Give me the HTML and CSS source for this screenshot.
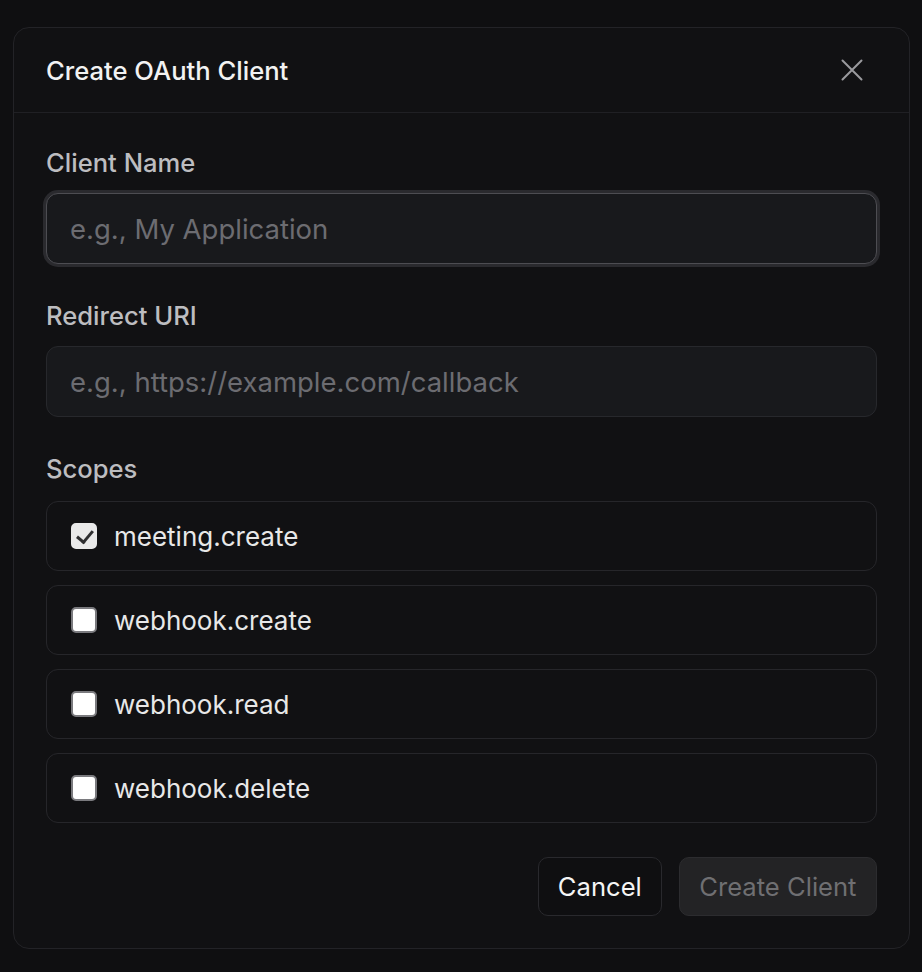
FILE: index.html
```html
<!DOCTYPE html>
<html lang="en">
<head>
    <meta charset="UTF-8">
    <meta name="viewport" content="width=device-width, initial-scale=1.0">
    <title>Create OAuth Client</title>
    <link rel="stylesheet" href="styles.css">
</head>
<body>
    <div class="dialog">
        <div class="dialog-header">
            <h1>Create OAuth Client</h1>
            <button class="close-btn" aria-label="Close">
                <svg width="22" height="22" viewBox="0 0 22 22" fill="none" stroke="currentColor" stroke-width="2" stroke-linecap="round">
                    <path d="M1.5 1.5L20.5 20.5M20.5 1.5L1.5 20.5"/>
                </svg>
            </button>
        </div>

        <form class="dialog-body">
            <div class="field">
                <label for="client-name">Client Name</label>
                <input id="client-name" class="text-input focused" type="text" placeholder="e.g., My Application" autofocus>
            </div>

            <div class="field">
                <label for="redirect-uri">Redirect URI</label>
                <input id="redirect-uri" class="text-input" type="text" placeholder="e.g., https://example.com/callback">
            </div>

            <div class="field scopes">
                <label>Scopes</label>
                <div class="scope-list">
                    <label class="scope-item"><input type="checkbox" checked> meeting.create</label>
                    <label class="scope-item"><input type="checkbox"> webhook.create</label>
                    <label class="scope-item"><input type="checkbox"> webhook.read</label>
                    <label class="scope-item"><input type="checkbox"> webhook.delete</label>
                </div>
            </div>

            <div class="actions">
                <button type="button" class="btn btn-outline">Cancel</button>
                <button type="submit" class="btn btn-primary" disabled>Create Client</button>
            </div>
        </form>
    </div>
</body>
</html>
```

FILE: styles.css
```css
* {
    margin: 0;
    padding: 0;
    box-sizing: border-box;
}

body {
    font-family: Inter, 'Noto Sans', sans-serif;
    background: #0f0f11;
    color: #ededed;
    padding: 27px 12px 24px 13px;
}

.dialog {
    background: #111113;
    border: 1px solid #232327;
    border-radius: 16px;
    width: 897px;
}

.dialog-header {
    display: flex;
    justify-content: space-between;
    align-items: center;
    height: 85px;
    padding: 0 46px 0 32px;
    border-bottom: 1px solid #202024;
}

.dialog-header h1 {
    font-size: 25.6px;
    font-weight: 500;
    color: #f2f2f2;
}

.close-btn {
    background: none;
    border: none;
    color: #9a9a9e;
    display: flex;
    cursor: pointer;
}

.dialog-body {
    display: flex;
    flex-direction: column;
    padding: 35px 32px 32px 32px;
}

.field {
    display: flex;
    flex-direction: column;
    margin-bottom: 37px;
}

.field.scopes {
    margin-bottom: 34px;
}

.field > label {
    font-size: 25.6px;
    font-weight: 500;
    line-height: 30px;
    color: #bdbdc0;
    margin-bottom: 15px;
}

.text-input {
    height: 71px;
    width: 100%;
    background: #18191c;
    border: 1px solid #27282c;
    border-radius: 12px;
    padding: 0 23px;
    font-family: inherit;
    font-size: 27.5px;
    color: #ededed;
    outline: none;
}

.text-input::placeholder {
    color: #6c6c71;
}

.text-input.focused,
.text-input:focus {
    border-color: #4d4d52;
    box-shadow: 0 0 0 3px #2a2a2e;
}

.scope-list {
    display: flex;
    flex-direction: column;
    gap: 14px;
    margin-top: 2px;
}

.scope-item {
    display: flex;
    align-items: center;
    gap: 17px;
    height: 70px;
    padding: 0 24px;
    border: 1px solid #26262a;
    border-radius: 12px;
    font-size: 26px;
    color: #e8e8e8;
    cursor: pointer;
}

.scope-item input {
    appearance: none;
    width: 26px;
    height: 26px;
    background: #ffffff;
    border: 2px solid #7a7a7e;
    border-radius: 5px;
    position: relative;
    flex-shrink: 0;
}

.scope-item input:checked {
    background: #e9e9e9;
    border-color: #e9e9e9;
}

.scope-item input:checked::after {
    content: '';
    position: absolute;
    left: 7px;
    top: 2px;
    width: 7px;
    height: 13px;
    border-right: 3.5px solid #2e2e30;
    border-bottom: 3.5px solid #2e2e30;
    transform: rotate(40deg);
}

.actions {
    display: flex;
    justify-content: flex-end;
    gap: 17px;
}

.btn {
    height: 59px;
    padding: 0 19px;
    border-radius: 10px;
    font-family: inherit;
    font-size: 25.6px;
    cursor: pointer;
}

.btn-outline {
    background: #0f0f11;
    border: 1px solid #29292d;
    color: #f5f5f5;
}

.btn-primary {
    padding: 0 19.5px;
    background: #232325;
    border: 1px solid #2c2c2f;
    color: #6f6f72;
}

.btn-primary:disabled {
    cursor: not-allowed;
}
```
